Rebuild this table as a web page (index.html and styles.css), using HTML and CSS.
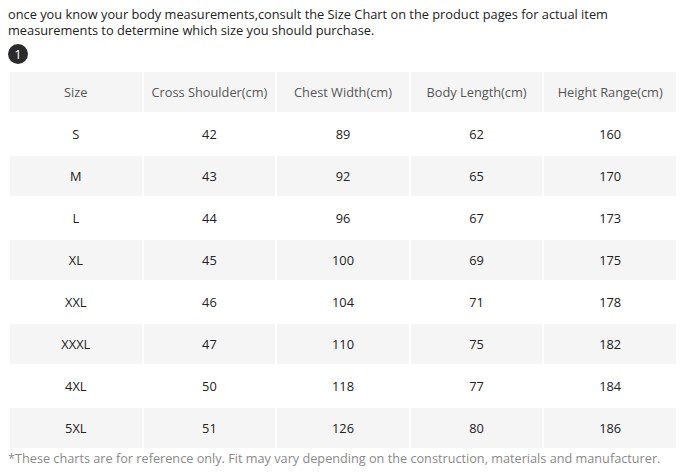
FILE: index.html
```html
<!DOCTYPE html>
<html>
<head>
<meta charset="utf-8">
<link rel="stylesheet" href="styles.css">
</head>
<body>
<div class="page">
  <p class="intro">once you know your body measurements,consult the Size Chart on the product pages for actual item measurements to determine which size you should purchase.</p>
  <div class="step"><span class="badge">1</span></div>
  <table class="chart">
    <thead>
      <tr><th>Size</th><th>Cross Shoulder(cm)</th><th>Chest Width(cm)</th><th>Body Length(cm)</th><th>Height Range(cm)</th></tr>
    </thead>
    <tbody>
      <tr><td>S</td><td>42</td><td>89</td><td>62</td><td>160</td></tr>
      <tr><td>M</td><td>43</td><td>92</td><td>65</td><td>170</td></tr>
      <tr><td>L</td><td>44</td><td>96</td><td>67</td><td>173</td></tr>
      <tr><td>XL</td><td>45</td><td>100</td><td>69</td><td>175</td></tr>
      <tr><td>XXL</td><td>46</td><td>104</td><td>71</td><td>178</td></tr>
      <tr><td>XXXL</td><td>47</td><td>110</td><td>75</td><td>182</td></tr>
      <tr><td>4XL</td><td>50</td><td>118</td><td>77</td><td>184</td></tr>
      <tr><td>5XL</td><td>51</td><td>126</td><td>80</td><td>186</td></tr>
    </tbody>
  </table>
  <p class="note">*These charts are for reference only. Fit may vary depending on the construction, materials and manufacturer.</p>
</div>
</body>
</html>
```
FILE: styles.css
```css
html, body {
  margin: 0;
  padding: 0;
  background: #fff;
}
.page {
  padding: 6px 8px 0 8px;
  font-family: "Open Sans", "Liberation Sans", sans-serif;
  color: #222;
}
.intro {
  margin: 0;
  font-size: 12.8px;
  line-height: 16px;
  color: #222;
}
.step {
  margin-top: 6px;
  height: 20px;
  display: flex;
  align-items: center;
}
.badge {
  width: 20px;
  height: 20px;
  border-radius: 50%;
  background: #2b2b2b;
  color: #fff;
  font-size: 13px;
  line-height: 20px;
  text-align: center;
}
.chart {
  margin-top: 6px;
  width: 670px;
  border-collapse: separate;
  border-spacing: 2px;
  table-layout: fixed;
  font-size: 12.8px;
}
.chart th, .chart td {
  height: 40px;
  padding: 0;
  text-align: center;
  vertical-align: middle;
}
.chart th {
  font-weight: normal;
  color: #555;
  background: #f5f5f5;
}
.chart td {
  color: #222;
}
.chart tbody tr:nth-child(even) td {
  background: #f5f5f5;
}
.note {
  margin: 0;
  font-size: 12.7px;
  line-height: 16px;
  color: #8a8a8a;
}
```
